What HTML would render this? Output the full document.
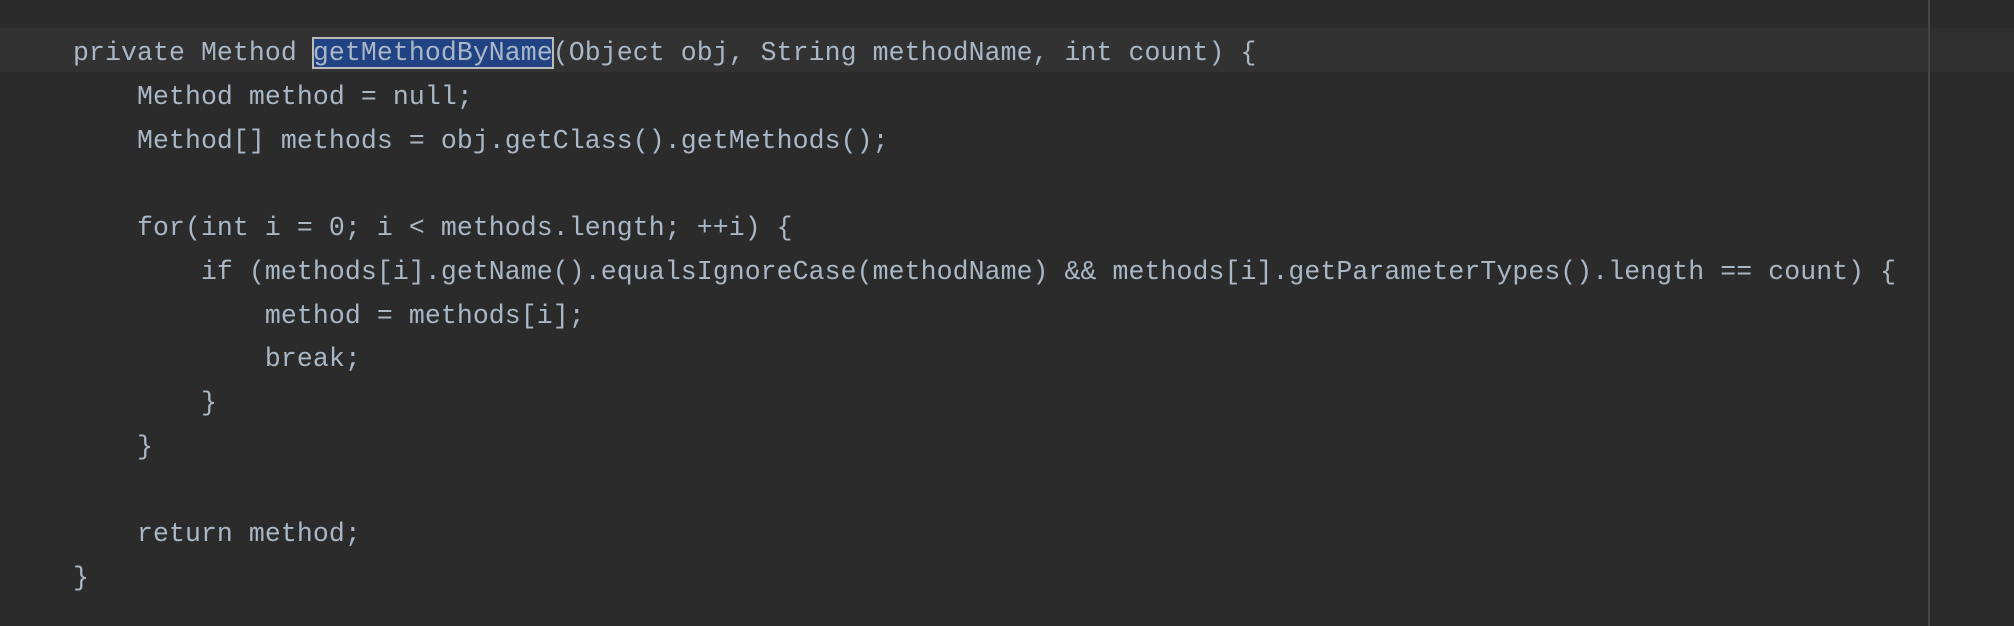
<!DOCTYPE html>
<html><head><style>
html,body{margin:0;padding:0;background:#2b2b2b;width:2014px;height:626px;overflow:hidden}
.hl{position:absolute;left:0;top:28px;width:1929px;height:44px;background:#323232}
.hl2{position:absolute;left:1930px;top:28px;width:84px;height:44px;background:#2f2f2f}
.vl{position:absolute;left:1928px;top:0;width:2px;height:626px;background:#454545}
pre{position:absolute;left:73px;top:32px;margin:0;font-family:"Liberation Mono",monospace;font-size:26.5px;letter-spacing:0.09px;line-height:43.75px;color:#a9b7c6}
.sel{background:#214283;outline:2px solid #bbbbbb;outline-offset:-1px}
</style></head><body>
<div class="hl"></div><div class="hl2"></div><div class="vl"></div>
<pre>private Method <span class="sel">getMethodByName</span>(Object obj, String methodName, int count) {
    Method method = null;
    Method[] methods = obj.getClass().getMethods();

    for(int i = 0; i &lt; methods.length; ++i) {
        if (methods[i].getName().equalsIgnoreCase(methodName) &amp;&amp; methods[i].getParameterTypes().length == count) {
            method = methods[i];
            break;
        }
    }

    return method;
}</pre>
</body></html>
